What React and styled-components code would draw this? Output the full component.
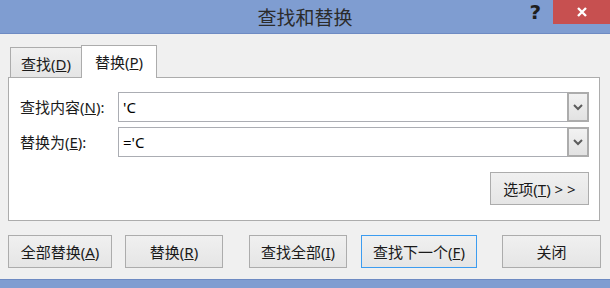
import React from "react";
import styled, { createGlobalStyle } from "styled-components";

const GlobalStyle = createGlobalStyle`
  html, body {
    margin: 0;
    padding: 0;
    background: #f0f0f0;
  }
  body {
    font-family: "Noto Sans", "Noto Sans CJK SC", sans-serif;
    color: #1a1a1a;
  }
  * {
    box-sizing: border-box;
  }
`;

const Window = styled.div`
  width: 610px;
  height: 288px;
  display: flex;
  flex-direction: column;
  background: #f0f0f0;
  overflow: hidden;
`;

const TitleBar = styled.header`
  height: 34px;
  flex: none;
  display: grid;
  grid-template-columns: 1fr auto 1fr;
  align-items: start;
  background: #7f9dd1;
  border-bottom: 1px solid #6e8bc3;
`;

const Title = styled.h1`
  grid-column: 2;
  margin: 0;
  padding-top: 5px;
  font-family: "Noto Sans CJK SC", sans-serif;
  font-weight: 400;
  font-size: 19px;
  line-height: 24px;
  color: #2b2b2b;
`;

const Controls = styled.div`
  grid-column: 3;
  justify-self: end;
  display: flex;
  align-items: flex-start;
`;

const HelpMark = styled.span`
  font-family: "DejaVu Sans", sans-serif;
  font-weight: 700;
  font-size: 20px;
  line-height: 22px;
  color: #1e1e1e;
  margin-right: 12px;
  padding-top: 1px;
`;

const CloseButton = styled.button`
  width: 57px;
  height: 24px;
  border: none;
  padding: 0;
  background: #c75050;
  display: flex;
  align-items: center;
  justify-content: center;
`;

const Content = styled.main`
  flex: 1;
  padding: 11px 10px 0 8px;
  display: flex;
  flex-direction: column;
`;

const TabRow = styled.div`
  height: 32px;
  display: flex;
  align-items: flex-end;
  padding-left: 2px;
`;

const Tab = styled.div`
  position: relative;
  width: ${(p) => (p.$active ? "76px" : "72px")};
  height: ${(p) => (p.$active ? "33px" : "30px")};
  margin-left: ${(p) => (p.$active ? "-1px" : "0")};
  margin-bottom: ${(p) => (p.$active ? "-1px" : "0")};
  z-index: ${(p) => (p.$active ? 1 : 0)};
  border: 1px solid #acacac;
  border-bottom: none;
  background: ${(p) =>
    p.$active ? "#ffffff" : "linear-gradient(#f0f0f0, #e5e5e5)"};
  display: flex;
  align-items: center;
  justify-content: center;
  padding-top: ${(p) => (p.$active ? "0" : "2px")};
  font-size: 15px;
  line-height: 20px;
`;

const Panel = styled.section`
  height: 144px;
  border: 1px solid #acacac;
  background: #ffffff;
  padding: 14px 10px 0 11px;
  display: flex;
  flex-direction: column;
  gap: 5px;
`;

const FieldRow = styled.div`
  height: 30px;
  display: flex;
  align-items: center;
`;

const Label = styled.label`
  width: 98px;
  flex: none;
  font-size: 15px;
  line-height: 20px;
`;

const Combo = styled.div`
  flex: 1;
  height: 30px;
  display: flex;
  border: 1px solid #abadb3;
  background: #ffffff;
`;

const ComboText = styled.div`
  flex: 1;
  padding-left: 4px;
  display: flex;
  align-items: center;
  font-size: 15px;
  line-height: 20px;
  color: #000;
`;

const DropButton = styled.div`
  width: 22px;
  margin: -1px -1px -1px 0;
  border: 2px solid #acacac;
  background: linear-gradient(#f2f2f2, #e2e2e2);
  display: flex;
  align-items: center;
  justify-content: center;
`;

const OptionsRow = styled.div`
  margin-top: 10px;
  display: flex;
  justify-content: flex-end;
`;

const Button = styled.button`
  width: ${(p) => p.$w}px;
  margin-left: ${(p) => p.$ml || 0}px;
  height: 33px;
  flex: none;
  border: 1px solid ${(p) => (p.$focused ? "#3c9cf0" : "#acacac")};
  background: linear-gradient(#f0f0f0, #e5e5e5);
  font-family: "Noto Sans", "Noto Sans CJK SC", sans-serif;
  font-size: 15px;
  line-height: 20px;
  color: #1a1a1a;
  padding: 0;
  white-space: nowrap;
`;

const Footer = styled.div`
  margin-top: 14px;
  display: flex;
`;

const BottomEdge = styled.div`
  height: 9px;
  flex: none;
  background: #7f9dd1;
  border-top: 1px solid #6e8bc3;
`;

const Chevron = () => (
  <svg width="10" height="7" viewBox="0 0 10 7">
    <polyline
      points="1,1 5,5 9,1"
      fill="none"
      stroke="#5c5c5c"
      strokeWidth="2"
    />
  </svg>
);

const CloseIcon = () => (
  <svg width="10" height="10" viewBox="0 0 10 10">
    <path d="M1 1 L9 9 M9 1 L1 9" stroke="#fff" strokeWidth="2.4" />
  </svg>
);

export default function App() {
  return (
    <>
      <GlobalStyle />
      <Window>
        <TitleBar>
          <Title>查找和替换</Title>
          <Controls>
            <HelpMark>?</HelpMark>
            <CloseButton aria-label="close">
              <CloseIcon />
            </CloseButton>
          </Controls>
        </TitleBar>
        <Content>
          <TabRow>
            <Tab>
              查找(<u>D</u>)
            </Tab>
            <Tab $active>
              替换(<u>P</u>)
            </Tab>
          </TabRow>
          <Panel>
            <FieldRow>
              <Label>
                查找内容(<u>N</u>):
              </Label>
              <Combo>
                <ComboText>'C</ComboText>
                <DropButton>
                  <Chevron />
                </DropButton>
              </Combo>
            </FieldRow>
            <FieldRow>
              <Label>
                替换为(<u>E</u>):
              </Label>
              <Combo>
                <ComboText>='C</ComboText>
                <DropButton>
                  <Chevron />
                </DropButton>
              </Combo>
            </FieldRow>
            <OptionsRow>
              <Button $w={99}>
                选项(<u>T</u>) &gt; &gt;
              </Button>
            </OptionsRow>
          </Panel>
          <Footer>
            <Button $w={104}>
              全部替换(<u>A</u>)
            </Button>
            <Button $w={98} $ml={13}>
              替换(<u>R</u>)
            </Button>
            <Button $w={98} $ml={26}>
              查找全部(<u>I</u>)
            </Button>
            <Button $w={116} $ml={14} $focused>
              查找下一个(<u>F</u>)
            </Button>
            <Button $w={99} $ml={25}>
              关闭
            </Button>
          </Footer>
        </Content>
        <BottomEdge />
      </Window>
    </>
  );
}
